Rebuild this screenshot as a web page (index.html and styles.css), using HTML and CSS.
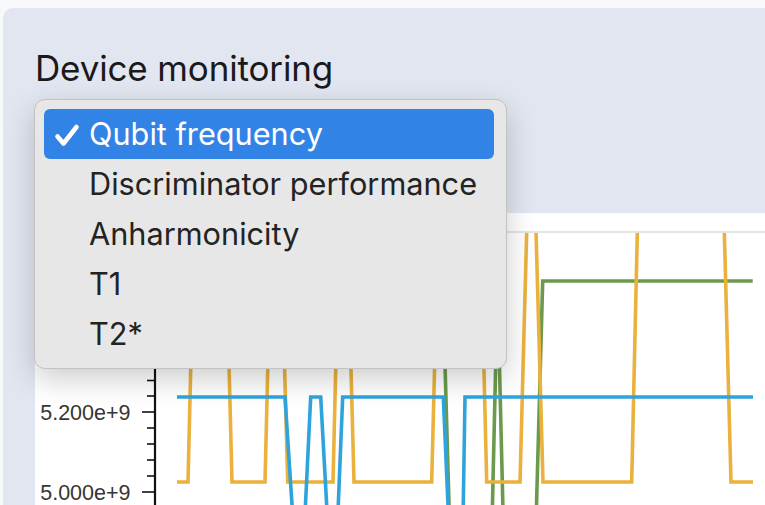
FILE: index.html
```html
<!DOCTYPE html>
<html>
<head>
<meta charset="utf-8">
<link rel="stylesheet" href="styles.css">
</head>
<body>
<div class="panel">
  <h1 class="title">Device monitoring</h1>
  <div class="controls"><div class="select"></div></div>
  <div class="chart-card">
    <svg class="chart" width="730" height="292" viewBox="35 213 730 292">
      <defs>
        <clipPath id="plot"><rect x="156" y="233" width="610" height="300"/></clipPath>
      </defs>
      <line x1="155" y1="232" x2="765" y2="232" stroke="#e4e4e4" stroke-width="2"/>
      <g stroke="#111" stroke-width="1.6">
        <line x1="155" y1="231" x2="155" y2="506" stroke-width="2.2"/>
        <line x1="142" y1="252" x2="155" y2="252"/>
        <line x1="147" y1="268" x2="155" y2="268"/>
        <line x1="147" y1="284" x2="155" y2="284"/>
        <line x1="147" y1="300" x2="155" y2="300"/>
        <line x1="147" y1="316" x2="155" y2="316"/>
        <line x1="142" y1="332" x2="155" y2="332"/>
        <line x1="147" y1="348" x2="155" y2="348"/>
        <line x1="147" y1="364" x2="155" y2="364"/>
        <line x1="147" y1="380.5" x2="155" y2="380.5"/>
        <line x1="147" y1="396" x2="155" y2="396"/>
        <line x1="142" y1="412" x2="155" y2="412"/>
        <line x1="147" y1="428" x2="155" y2="428"/>
        <line x1="147" y1="444" x2="155" y2="444"/>
        <line x1="147" y1="460" x2="155" y2="460"/>
        <line x1="147" y1="476" x2="155" y2="476"/>
        <line x1="142" y1="492" x2="155" y2="492"/>
      </g>
      <g class="tick-label" text-anchor="end">
        <text x="130.5" y="420.2">5.200e+9</text>
        <text x="130.5" y="500.2">5.000e+9</text>
      </g>
      <g clip-path="url(#plot)" fill="none" stroke-width="3.6">
        <polyline stroke="#6b9a4c" points="177,281 442.6,281 450.6,560 491.2,560 497.5,285 504.2,560 535,560 542.7,281 752.7,281"/>
        <polyline stroke="#eab13d" points="177,482 188,482 194.3,220 225.3,220 232,482 265,482 271.4,220 280.6,220 287.7,482 333,482 339.3,220 347,220 354,482 431.7,482 438.3,220 480.3,220 486.7,482 520,482 527,220 535.7,220 543,482 631.7,482 637.6,220 724,220 731,482 753,482"/>
        <polyline stroke="#2fa4dc" points="177,397 285,397 295.6,560 302.8,560 310.7,397 320.7,397 329.7,560 336,560 342.7,397 443.3,397 450.4,560 462.4,560 465,397 753,397"/>
      </g>
    </svg>
  </div>
  <div class="popup">
    <div class="item selected">
      <svg class="check" width="24" height="36" viewBox="0 0 24 36"><polyline points="3.5,20.5 9.5,27.5 22.5,11" fill="none" stroke="#fff" stroke-width="4.6" stroke-linecap="round" stroke-linejoin="round"/></svg>
      <span class="label">Qubit frequency</span>
    </div>
    <div class="item"><span class="check-space"></span><span class="label">Discriminator performance</span></div>
    <div class="item"><span class="check-space"></span><span class="label">Anharmonicity</span></div>
    <div class="item"><span class="check-space"></span><span class="label">T1</span></div>
    <div class="item"><span class="check-space"></span><span class="label">T2*</span></div>
  </div>
</div>
</body>
</html>
```
FILE: styles.css
```css
html, body {
  margin: 0;
  padding: 0;
}
body {
  background: #f8f9fb;
  overflow: hidden;
  width: 765px;
  height: 505px;
  font-family: Inter, "Noto Sans", sans-serif;
}
.panel {
  position: relative;
  margin: 8px 0 0 3px;
  width: 820px;
  height: 600px;
  box-sizing: border-box;
  padding: 38px 0 0 32px;
  background: #e2e6f0;
  border-radius: 10px;
}
.title {
  margin: 0;
  font-size: 35px;
  line-height: 44px;
  font-weight: 400;
  color: #1a1a1a;
  letter-spacing: -0.15px;
}
.controls {
  height: 123px;
  box-sizing: border-box;
  padding-top: 18px;
}
.select {
  width: 300px;
  height: 40px;
  background: #fff;
  border-radius: 6px;
}
.chart-card {
  background: #fff;
  width: 790px;
  height: 330px;
}
.chart {
  display: block;
}
.tick-label {
  font-family: "Liberation Sans", Arial, sans-serif;
  font-size: 21.5px;
  fill: #363636;
}
.popup {
  position: absolute;
  left: 31px;
  top: 91px;
  width: 473px;
  box-sizing: border-box;
  padding: 9px 12px 9px 9px;
  background: #e7e7e7;
  border: 1px solid #c2c2c2;
  border-radius: 11px;
  box-shadow: 0 10px 30px rgba(0, 0, 0, 0.2);
}
.item {
  display: flex;
  align-items: center;
  height: 50px;
  padding-left: 10px;
  border-radius: 6px;
  font-size: 30.7px;
  line-height: 50px;
  color: #232323;
}
.item.selected {
  background: #3283e6;
  color: #fff;
}
.check, .check-space {
  width: 24px;
  height: 36px;
  margin-right: 11px;
  flex: none;
  overflow: visible;
}
.label {
  white-space: nowrap;
}
```
